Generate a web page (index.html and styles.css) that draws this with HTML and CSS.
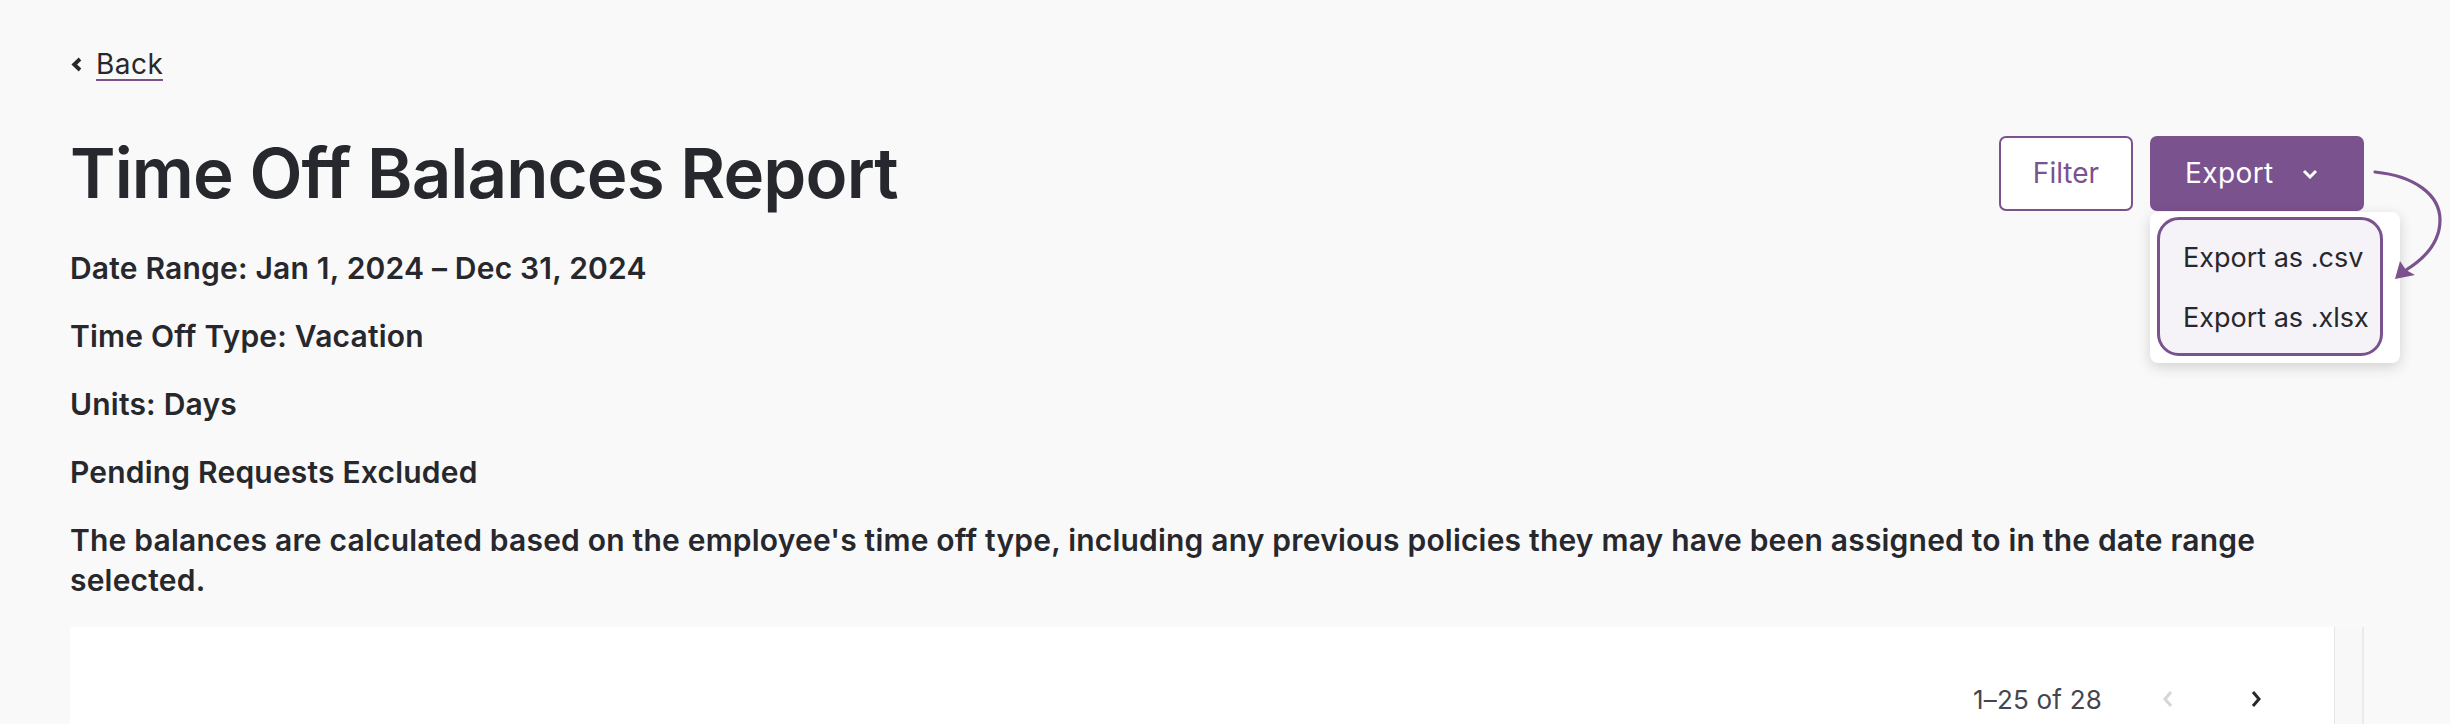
FILE: index.html
```html
<!DOCTYPE html>
<html lang="en">
<head>
<meta charset="utf-8">
<title>Time Off Balances Report</title>
<link rel="stylesheet" href="styles.css">
</head>
<body>
<main class="page">
  <a class="back" href="#">
    <svg class="back-icon" width="13" height="15" viewBox="0 0 13 15" aria-hidden="true"><path d="M10 2 L4.2 7.5 L10 13" fill="none" stroke="currentColor" stroke-width="3.8"/></svg>
    <span class="back-label">Back</span>
  </a>

  <header class="report-header">
    <h1 class="title">Time Off Balances Report</h1>
    <div class="actions">
      <button class="btn btn-outline" type="button">Filter</button>
      <div class="export-wrap">
        <button class="btn btn-primary" type="button">Export
          <svg class="btn-chevron" width="16" height="10" viewBox="0 0 16 10" aria-hidden="true"><path d="M2 2 L8 8 L14 2" fill="none" stroke="currentColor" stroke-width="3"/></svg>
        </button>
        <div class="menu">
          <div class="menu-highlight">
            <div class="menu-item">Export as .csv</div>
            <div class="menu-item">Export as .xlsx</div>
          </div>
        </div>
        <svg class="annotation-arrow" width="85" height="130" viewBox="0 0 85 130" aria-hidden="true">
          <path d="M10 12 C 50 16, 75 35, 75 60 C 75 80, 62 97, 41 110" fill="none" stroke="#7a528e" stroke-width="3.2" stroke-linecap="round"/>
          <polygon points="30,119 35,101 41,110 50,115" fill="#7a528e"/>
        </svg>
      </div>
    </div>
  </header>

  <section class="meta">
    <p>Date Range: Jan 1, 2024 – Dec 31, 2024</p>
    <p>Time Off Type: Vacation</p>
    <p>Units: Days</p>
    <p>Pending Requests Excluded</p>
    <p>The balances are calculated based on the employee's time off type, including any previous policies they may have been assigned to in the date range selected.</p>
  </section>

  <section class="table-area">
    <div class="card">
      <div class="pagination">
        <span class="page-count">1–25 of 28</span>
        <svg class="page-btn page-prev" width="12" height="18" viewBox="0 0 12 18" aria-hidden="true"><path d="M9 2 L3 9 L9 16" fill="none" stroke="currentColor" stroke-width="3"/></svg>
        <svg class="page-btn page-next" width="12" height="18" viewBox="0 0 12 18" aria-hidden="true"><path d="M3 2 L9 9 L3 16" fill="none" stroke="currentColor" stroke-width="3"/></svg>
      </div>
    </div>
    <div class="scroll-strip"></div>
  </section>
</main>
</body>
</html>
```

FILE: styles.css
```css
* { box-sizing: border-box; }

html, body {
  margin: 0;
  height: 100%;
  overflow: hidden;
}

body {
  background: #f9f9f9;
  color: #27282d;
  font-family: "Inter", "Liberation Sans", sans-serif;
}

.page {
  padding: 49px 86px 0 70px;
}

.back {
  display: inline-flex;
  align-items: center;
  gap: 13px;
  color: #27282d;
  text-decoration: none;
  font-size: 28px;
  line-height: 32px;
  height: 32px;
}

.back-icon { margin-top: -2px; }

.back-label {
  border-bottom: 2px solid #7a528e;
  line-height: 29px;
  letter-spacing: 0.5px;
}

.report-header {
  display: flex;
  align-items: center;
  justify-content: space-between;
  margin-top: 52px;
  height: 80px;
}

.title {
  margin: 0;
  font-size: 69px;
  line-height: 80px;
  font-weight: 600;
  letter-spacing: -0.9px;
}

.actions {
  display: flex;
  align-items: center;
  gap: 17px;
}

.btn {
  font-family: inherit;
  font-size: 28px;
  height: 75px;
  border-radius: 7px;
  cursor: pointer;
}

.btn-outline {
  width: 134px;
  background: #fff;
  border: 2px solid #7a528e;
  color: #7a528e;
}

.export-wrap {
  position: relative;
}

.btn-primary {
  width: 214px;
  display: flex;
  align-items: center;
  gap: 28px;
  background: #7a528e;
  border: none;
  color: #fff;
  padding: 0 0 0 35px;
  letter-spacing: 0.4px;
}

.btn-chevron { margin-top: 2px; }

.menu {
  position: absolute;
  top: 76px;
  left: 0;
  width: 250px;
  height: 151px;
  background: #fff;
  border-radius: 8px;
  box-shadow: 0 4px 14px rgba(0, 0, 0, 0.16);
  padding: 5px 17px 7px 7px;
  z-index: 2;
}

.menu-highlight {
  height: 100%;
  border: 3px solid #7a528e;
  border-radius: 22px;
  background: #f5f3f7;
  padding: 8px 0 0 23px;
}

.menu-item {
  font-size: 27px;
  line-height: 60px;
  white-space: nowrap;
  color: #27282d;
}

.annotation-arrow {
  position: absolute;
  left: 215px;
  top: 24px;
  z-index: 3;
}

.meta {
  margin-top: 35px;
}

.meta p {
  margin: 0 0 28px;
  font-size: 30px;
  line-height: 40px;
  font-weight: 600;
  letter-spacing: 0.2px;
}

.meta p:last-child { margin-bottom: 0; }

.table-area {
  display: flex;
  margin-top: 27px;
  height: 200px;
}

.card {
  flex: 1;
  background: #fff;
  border-right: 1px solid #e6e6e6;
}

.scroll-strip {
  width: 29px;
  background: #f8f8f8;
  border-right: 2px solid #ebebeb;
}

.pagination {
  display: flex;
  align-items: center;
  justify-content: flex-end;
  padding: 52px 72px 0 0;
  height: 40px;
  box-sizing: content-box;
}

.page-count {
  font-size: 26px;
  color: #45464d;
  letter-spacing: 0.2px;
  margin-right: 60px;
}

.page-prev { color: #d6d6d6; margin-right: 76px; }
.page-next { color: #27282d; }
```
